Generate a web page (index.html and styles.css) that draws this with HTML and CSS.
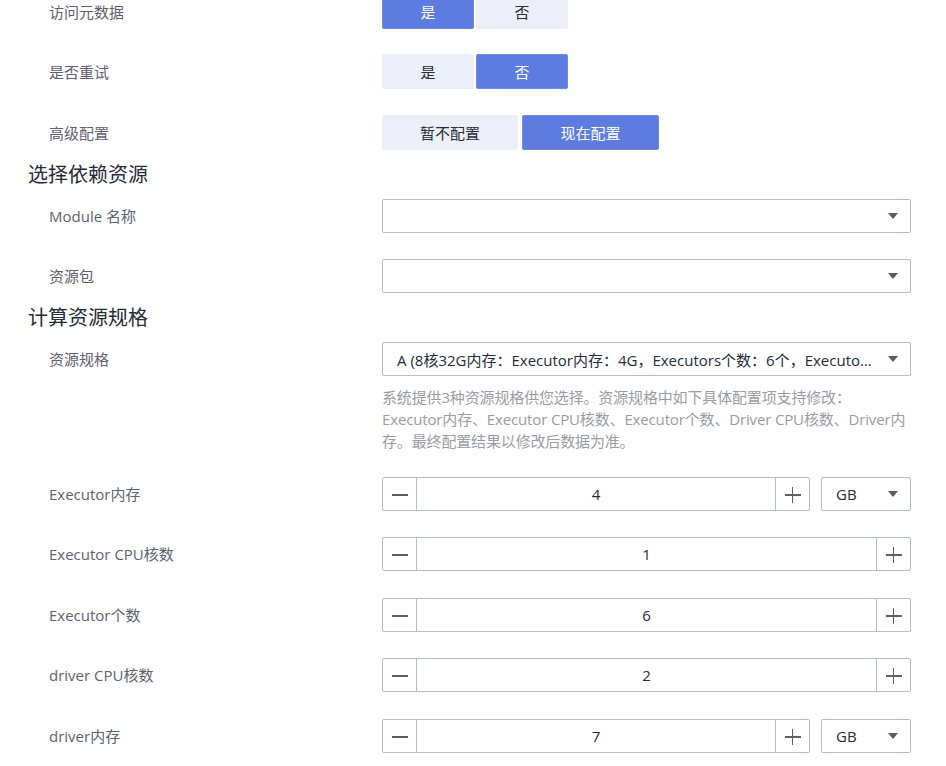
FILE: index.html
```html
<!DOCTYPE html>
<html lang="zh-CN">
<head>
<meta charset="utf-8">
<link rel="stylesheet" href="styles.css">
</head>
<body>
<div class="page">
  <div class="row">
    <div class="label">访问元数据</div>
    <div class="seg">
      <span class="seg-btn on">是</span>
      <span class="seg-btn">否</span>
    </div>
  </div>
  <div class="row">
    <div class="label">是否重试</div>
    <div class="seg">
      <span class="seg-btn">是</span>
      <span class="seg-btn on">否</span>
    </div>
  </div>
  <div class="row wide-gap">
    <div class="label">高级配置</div>
    <div class="seg seg-wide">
      <span class="seg-btn">暂不配置</span>
      <span class="seg-btn on">现在配置</span>
    </div>
  </div>

  <h2 class="section">选择依赖资源</h2>
  <div class="row srow">
    <div class="label">Module 名称</div>
    <div class="select full"><span class="sel-text"></span><i class="caret"></i></div>
  </div>
  <div class="row srow">
    <div class="label">资源包</div>
    <div class="select full"><span class="sel-text"></span><i class="caret"></i></div>
  </div>

  <h2 class="section">计算资源规格</h2>
  <div class="row srow">
    <div class="label">资源规格</div>
    <div class="select full"><span class="sel-text">A (8核32G内存：Executor内存：4G，Executors个数：6个，Executor CPU核数：1个，Driver CPU核数：2个，Driver内存：7G)</span><i class="caret"></i></div>
  </div>
  <div class="help">系统提供3种资源规格供您选择。资源规格中如下具体配置项支持修改：<br>Executor内存、Executor CPU核数、Executor个数、Driver CPU核数、Driver内<br>存。最终配置结果以修改后数据为准。</div>

  <div class="row num-row">
    <div class="label">Executor内存</div>
    <div class="ctrl">
      <div class="num"><span class="nb minus"></span><span class="nv">4</span><span class="nb plus"></span></div>
      <div class="select unit"><span class="sel-text">GB</span><i class="caret"></i></div>
    </div>
  </div>
  <div class="row num-row">
    <div class="label">Executor CPU核数</div>
    <div class="ctrl">
      <div class="num"><span class="nb minus"></span><span class="nv">1</span><span class="nb plus"></span></div>
    </div>
  </div>
  <div class="row num-row wide-gap">
    <div class="label">Executor个数</div>
    <div class="ctrl">
      <div class="num"><span class="nb minus"></span><span class="nv">6</span><span class="nb plus"></span></div>
    </div>
  </div>
  <div class="row num-row">
    <div class="label">driver CPU核数</div>
    <div class="ctrl">
      <div class="num"><span class="nb minus"></span><span class="nv">2</span><span class="nb plus"></span></div>
    </div>
  </div>
  <div class="row num-row wide-gap">
    <div class="label">driver内存</div>
    <div class="ctrl">
      <div class="num"><span class="nb minus"></span><span class="nv">7</span><span class="nb plus"></span></div>
      <div class="select unit"><span class="sel-text">GB</span><i class="caret"></i></div>
    </div>
  </div>
</div>
</body>
</html>
```
FILE: styles.css
```css
* { box-sizing: border-box; }
html, body { margin: 0; padding: 0; background: #fff; }
body {
  font-family: "Open Sans", "Noto Sans CJK SC", sans-serif;
  font-size: 15px;
  color: #252b3a;
  overflow: hidden;
}
.page {
  width: 946px;
  margin-top: -6px;
  padding-left: 28px;
  display: flex;
  flex-direction: column;
}
.row {
  display: flex;
  align-items: center;
  padding-left: 21px;
}
.row + .row { margin-top: 25px; }
.row + .row.wide-gap { margin-top: 26px; }
.srow + .srow { margin-top: 26px; }
.label {
  width: 333px;
  flex: none;
  color: #5e6270;
  font-size: 15px;
  line-height: 20px;
}
.seg {
  display: flex;
  gap: 2px;
  height: 35px;
}
.seg-btn {
  width: 92px;
  display: flex;
  align-items: center;
  justify-content: center;
  background: #eceff8;
  color: #252b3a;
  border: 1px solid #eceff8;
  border-radius: 2px;
  font-size: 15px;
}
.seg-btn.on {
  background: #5e7ce0;
  border-color: #6f8ae6;
  color: #fff;
}
.seg-wide { gap: 4px; }
.seg-wide .seg-btn { width: 136px; }
.seg-wide .seg-btn.on { width: 137px; }
.section {
  margin: 12px 0 11px 0;
  font-size: 20px;
  font-weight: normal;
  line-height: 26px;
  color: #252b3a;
}
.select {
  height: 34px;
  border: 1px solid #b8bbc3;
  border-radius: 2px;
  display: flex;
  align-items: center;
  padding: 0 12px 0 14px;
  background: #fff;
}
.full { width: 529px; }
.sel-text {
  flex: 1;
  min-width: 0;
  white-space: nowrap;
  overflow: hidden;
  text-overflow: ellipsis;
  color: #252b3a;
  padding-right: 16px;
}
.caret {
  flex: none;
  width: 0;
  height: 0;
  border-left: 5px solid transparent;
  border-right: 5px solid transparent;
  border-top: 6px solid #585c68;
}
.help {
  margin: 10px 0 0 354px;
  width: 529px;
  color: #9a9ca3;
  font-size: 15px;
  line-height: 22px;
  white-space: nowrap;
  letter-spacing: -0.15px;
}
.help + .row { margin-top: 25px; }
.num-row + .num-row { margin-top: 26px; }
.num-row + .num-row.wide-gap { margin-top: 27px; }
.ctrl {
  display: flex;
  gap: 11px;
  width: 529px;
}
.num {
  flex: 1;
  height: 34px;
  display: flex;
  border: 1px solid #b8bbc3;
  border-radius: 2px;
}
.nb {
  width: 34px;
  flex: none;
  position: relative;
}
.minus { border-right: 1px solid #b8bbc3; }
.plus { border-left: 1px solid #b8bbc3; }
.nb::before, .plus::after {
  content: "";
  position: absolute;
  left: 8px;
  top: 16px;
  width: 16px;
  height: 1.5px;
  background: #5b5f6b;
}
.minus::before { left: 9px; }
.plus::after {
  left: 15.5px;
  top: 8.5px;
  width: 1.5px;
  height: 16px;
}
.plus::before { left: 8.5px; }
.nv {
  flex: 1;
  display: flex;
  align-items: center;
  justify-content: center;
  color: #252b3a;
}
.unit {
  width: 90px;
  flex: none;
}
.unit .sel-text { padding-right: 0; }
```
